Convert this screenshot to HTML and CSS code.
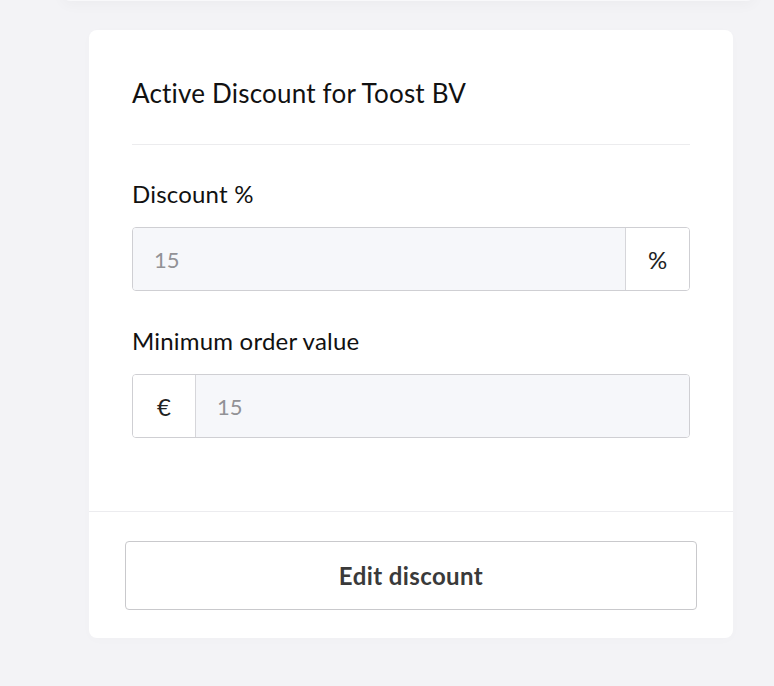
FILE: index.html
```html
<!DOCTYPE html>
<html>
<head>
<meta charset="utf-8">
<link rel="stylesheet" href="styles.css">
</head>
<body>
<div class="page">
  <div class="prev-card"></div>
  <div class="card">
    <div class="card-body">
      <h2 class="title">Active Discount for Toost BV</h2>
      <div class="field">
        <label class="label">Discount %</label>
        <div class="group">
          <div class="input">15</div>
          <div class="addon addon-right">%</div>
        </div>
      </div>
      <div class="field">
        <label class="label">Minimum order value</label>
        <div class="group">
          <div class="addon addon-left">€</div>
          <div class="input">15</div>
        </div>
      </div>
    </div>
    <div class="card-footer">
      <button class="btn">Edit discount</button>
    </div>
  </div>
</div>
</body>
</html>
```
FILE: styles.css
```css
html, body {
  margin: 0;
  padding: 0;
  background: #f3f3f6;
  font-family: "Lato", "Open Sans", sans-serif;
}
.page {
  width: 774px;
  height: 686px;
  overflow: hidden;
  position: relative;
}
.prev-card {
  position: absolute;
  left: 62px;
  top: -20px;
  width: 693px;
  height: 21px;
  background: #f8f8fa;
  border-radius: 0 0 8px 8px;
  box-shadow: 0 4px 14px rgba(0,0,0,0.03);
}
.card {
  margin: 30px 0 0 89px;
  width: 644px;
  height: 608px;
  background: #fff;
  border-radius: 8px;
  display: flex;
  flex-direction: column;
  box-shadow: 0 2px 12px rgba(0,0,0,0.015);
}
.card-body {
  padding: 0 43px;
  flex: 1;
  border-bottom: 1px solid #ececef;
}
.title {
  margin: 0;
  font-weight: 400;
  font-size: 26px;
  letter-spacing: 0.2px;
  color: #111;
  padding: 48px 0 36px;
  line-height: 30px;
  border-bottom: 1px solid #ececee;
}
.field {
  margin-top: 34px;
}
.field + .field {
  margin-top: 35px;
}
.label {
  display: block;
  font-size: 24px;
  letter-spacing: 0.2px;
  color: #111;
  line-height: 30px;
  margin-bottom: 18px;
}
.group {
  display: flex;
  height: 64px;
  border: 1px solid #cfcfd3;
  border-radius: 4px;
  box-sizing: border-box;
  overflow: hidden;
}
.input {
  flex: 1;
  background: #f6f7fa;
  display: flex;
  align-items: center;
  padding-left: 21px;
  font-size: 22px;
  color: #929296;
}
.addon {
  width: 62px;
  background: #fff;
  display: flex;
  align-items: center;
  justify-content: center;
  font-size: 24px;
  color: #222;
}
.addon-right { border-left: 1px solid #d6d6da; width: 63px; }
.addon-left { border-right: 1px solid #d6d6da; }
.card-footer {
  height: 126px;
  box-sizing: border-box;
  padding: 29px 36px 0;
}
.btn {
  width: 100%;
  height: 69px;
  background: #fff;
  border: 1px solid #c9c9cc;
  border-radius: 4px;
  font-family: inherit;
  font-size: 24px;
  font-weight: 700;
  letter-spacing: 0.4px;
  color: #3a3a3a;
}
```
